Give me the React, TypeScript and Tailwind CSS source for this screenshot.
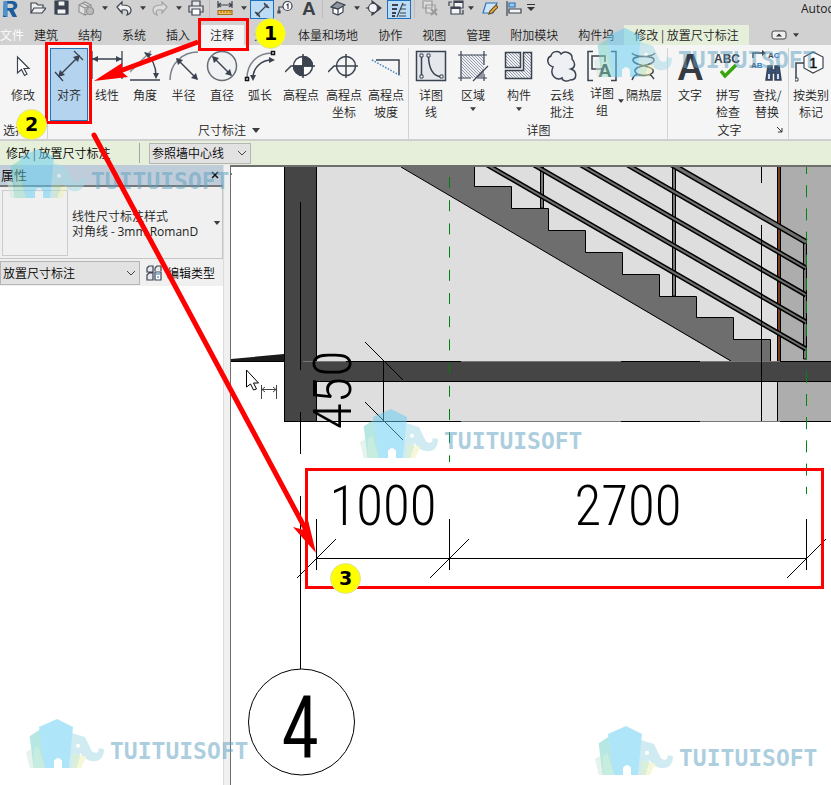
import type { ReactNode } from 'react';

const INK = '#3b4350';

function Caret({ className = 'h-[4px] w-[6px]' }: { className?: string }) {
  return (
    <svg viewBox="0 0 8 5" className={`shrink-0 ${className}`} aria-hidden="true">
      <path d="M0 0h8L4 5z" fill="#3c3c3c" />
    </svg>
  );
}

function Icon({ children }: { children: ReactNode }) {
  return (
    <svg viewBox="0 0 32 32" className="h-8 w-8 shrink-0" fill="none" stroke={INK} strokeWidth="1.5" aria-hidden="true">
      {children}
    </svg>
  );
}

function Small({ children }: { children: ReactNode }) {
  return (
    <svg viewBox="0 0 16 16" className="h-4 w-4 shrink-0" fill="none" stroke={INK} strokeWidth="1.2" aria-hidden="true">
      {children}
    </svg>
  );
}

const icons = {
  modify: (
    <Icon>
      <path d="M10.500 7v16l4-3.500 3 6 2.500-1.500-3-5.500h5z" fill="#fff" strokeWidth="1.200" />
    </Icon>
  ),
  aligned: (
    <Icon>
      <path d="M6 26 26 6" />
      <path d="m2 22 8 9M21 1l9 9" strokeWidth="1.300" />
      <path d="m5 27 2-7 5 5zM27 5l-7 2 5 5z" fill={INK} stroke="none" />
    </Icon>
  ),
  linear: (
    <Icon>
      <path d="M1 9h30M1 1v28M31 1v28" strokeWidth="1.300" />
      <path d="m1 9 6-3v6zM31 9l-6-3v6z" fill={INK} stroke="none" />
    </Icon>
  ),
  angular: (
    <Icon>
      <path d="M1 30h30" />
      <path d="M1 22 22 1" stroke="#8a8f96" />
      <path d="M16 3c7 5 11 13 11 23" />
      <path d="m15 2 8 2-4 4zM27 29l-3-6h6z" fill={INK} stroke="none" />
    </Icon>
  ),
  radial: (
    <Icon>
      <path d="M2 30C2 14 14 2 30 2" stroke="#7b828c" />
      <path d="m9 9 20 20" />
      <path d="m8 8 7 2-5 5zM30 30l-7-2 5-5z" fill={INK} stroke="none" />
    </Icon>
  ),
  diameter: (
    <Icon>
      <circle cx="16" cy="16" r="14.500" stroke="#666d77" fill="#f0f1f3" />
      <path d="m7 7 18 18" />
      <path d="m6 6 7 2-5 5zM26 26l-7-2 5-5z" fill={INK} stroke="none" />
    </Icon>
  ),
  arc: (
    <Icon>
      <path d="M3 28C3 14 13 3 28 3" stroke="#7b828c" />
      <path d="M9 28c0-10 8-18 19-18" />
      <path d="m9 31-3-6h6zM31 10l-6-3v6z" fill={INK} stroke="none" />
      <path d="M1.500 27.500h3v3h-3zM27.500 1.500h3v3h-3z" fill="#fff" stroke="#111" />
    </Icon>
  ),
  spot: (
    <Icon>
      <circle cx="18" cy="16" r="9.500" fill="#fff" />
      <path d="M18 6.500a9.500 9.500 0 0 1 9.500 9.500H18zM18 25.500A9.500 9.500 0 0 1 8.500 16H18z" fill={INK} />
      <path d="M0 22l6-6h24M18 4v24" />
    </Icon>
  ),
  spotCoord: (
    <Icon>
      <circle cx="18" cy="16" r="9.500" />
      <path d="M0 22l6-6h24M18 4v24" />
    </Icon>
  ),
  spotSlope: (
    <Icon>
      <path d="M6 10h23v15" />
      <path d="m2 10 29 16" stroke="#3f82bd" strokeDasharray="1.500 1.500" />
    </Icon>
  ),
  detailLine: (
    <Icon>
      <path d="M1.500 1.500h29v29h-29z" fill="#e4e7ec" />
      <path d="M6.500 6v20M13.500 5c0 12 4 21 13 22" />
      <path d="M5 4h3v3H5zM5 25h3v3H5zM12 4h3v3h-3zM25 25h3v3h-3z" fill="#fff" strokeWidth="1" />
    </Icon>
  ),
  region: (
    <Icon>
      <path d="M4 5h23v23H4z" fill="url(#hatch)" stroke="none" />
      <path d="M4 1v30M27 1v14M27 24v7M1 5h29M1 28h13M20 28h10" strokeWidth="1.200" />
      <path d="m19 27 8-8v8z" fill="#9298a2" stroke="none" />
      <path d="m16 31 15-15" strokeWidth="1.200" />
    </Icon>
  ),
  component: (
    <Icon>
      <path d="M2.500 2.500h15v15h-15zM20.500 2.500h8v26h-26v-8h18z" fill="url(#hatch)" />
    </Icon>
  ),
  cloud: (
    <Icon>
      <path d="M7 17C1 15 0 8 5 6c1-5 8-6 10-2 4-4 12-1 11 5 4 4 3 9-1 10 6 2 7 11-1 11-3 2-8 1-8-2-5 3-13-2-9-11z" fill="#eff0f3" />
    </Icon>
  ),
  group: (
    <Icon>
      <path d="M7 1.500H2v29h5M25 1.500h5v29h-5M17 19H6V6h13v6" />
      <text x="12" y="27" fontSize="19" fontWeight="700" fontFamily="Liberation Sans, sans-serif" fill="#2b3038" stroke="none">A</text>
    </Icon>
  ),
  insulation: (
    <Icon>
      <path d="M4 3c3 6 22 1 22 7S8 15 7 20s9 6 13 5 4 2 6 4M27 3C24 9 5 4 5 10s18 5 20 10-9 6-14 5-5 1-7 5" />
    </Icon>
  ),
  text: (
    <Icon>
      <text x="3" y="30" fontSize="37" fontWeight="700" fontFamily="Liberation Sans, sans-serif" fill="#363b43" stroke="none">A</text>
    </Icon>
  ),
  spelling: (
    <Icon>
      <text x="2" y="13" fontSize="12" fontWeight="700" fontFamily="Liberation Sans, sans-serif" fill={INK} stroke="none">ABC</text>
      <path d="m9 21 4 5 11-11" stroke="#3aa40c" strokeWidth="3.500" />
    </Icon>
  ),
  find: (
    <Icon>
      <path d="M2 8V3h9" />
      <path d="m15 3-4-3v6z" fill={INK} stroke="none" />
      <text x="17" y="8" fontSize="8" fontWeight="700" fontFamily="Liberation Sans, sans-serif" fill={INK} stroke="none">A<tspan fill="#2677c9">C</tspan></text>
      <text x="0" y="18" fontSize="8" fontWeight="700" fontFamily="Liberation Sans, sans-serif" fill={INK} stroke="none">A<tspan fill="#2677c9">B</tspan></text>
      <path d="M17 16h4v4h3v-4h4l2 14h-6v-7h-3v7h-6z" fill="#34537c" />
      <path d="M18 24v5M27 24v5" stroke="#c9dbee" strokeWidth="2" />
    </Icon>
  ),
  tag: (
    <Icon>
      <path d="M1 28V13h8" />
      <path d="m9 7 9-5 10 5v11l-10 5-9-5z" fill="#fff" strokeWidth="1.200" />
      <path d="M0 28h3v3H0z" fill="#fff" strokeWidth="1" />
      <text x="14" y="18" fontSize="15" fontFamily="Liberation Sans, sans-serif" fill="#111" stroke="#111" strokeWidth="0.500">1</text>
    </Icon>
  ),
};

type Tool = { lines: string[]; icon: ReactNode; w: string; active?: boolean; caret?: 'below' | 'side' };

const dimensionTools: Tool[] = [
  { lines: ['对齐'], icon: icons.aligned, w: 'w-[38px]', active: true },
  { lines: ['线性'], icon: icons.linear, w: 'w-[38px]' },
  { lines: ['角度'], icon: icons.angular, w: 'w-[38px]' },
  { lines: ['半径'], icon: icons.radial, w: 'w-[39px]' },
  { lines: ['直径'], icon: icons.diameter, w: 'w-[38px]' },
  { lines: ['弧长'], icon: icons.arc, w: 'w-[38px]' },
  { lines: ['高程点'], icon: icons.spot, w: 'w-[44px]' },
  { lines: ['高程点', '坐标'], icon: icons.spotCoord, w: 'w-[42px]' },
  { lines: ['高程点', '坡度'], icon: icons.spotSlope, w: 'w-[42px]' },
];

const detailTools: Tool[] = [
  { lines: ['详图', '线'], icon: icons.detailLine, w: 'w-[42px]' },
  { lines: ['区域'], icon: icons.region, w: 'w-[42px]', caret: 'below' },
  { lines: ['构件'], icon: icons.component, w: 'w-[50px]', caret: 'below' },
  { lines: ['云线', '批注'], icon: icons.cloud, w: 'w-[36px]' },
  { lines: ['详图', '组'], icon: icons.group, w: 'w-[44px]', caret: 'side' },
  { lines: ['隔热层'], icon: icons.insulation, w: 'w-[40px]' },
];

const textTools: Tool[] = [
  { lines: ['文字'], icon: icons.text, w: 'w-[38px]' },
  { lines: ['拼写', '检查'], icon: icons.spelling, w: 'w-[38px]' },
  { lines: ['查找/', '替换'], icon: icons.find, w: 'w-[40px]' },
];

function ToolButton({ tool }: { tool: Tool }) {
  return (
    <button
      type="button"
      className={`relative flex h-[73px] shrink-0 flex-col items-center border pt-px leading-[17px] whitespace-nowrap ${tool.w} ${
        tool.active ? 'border-[#2a6fb5] bg-[#b4d3ee]' : 'border-transparent'
      }`}
    >
      {tool.icon}
      <span className={`block ${tool.caret === 'side' ? 'mt-[2px]' : 'mt-1'}`}>
        {tool.lines.map((line) => (
          <span key={line} className="block">{line}</span>
        ))}
      </span>
      {tool.caret === 'below' && <Caret className="mt-1 h-[4px] w-[6px]" />}
      {tool.caret === 'side' && <Caret className="absolute -right-px bottom-[17px] h-[4px] w-[6px]" />}
    </button>
  );
}

function Panel({ tools, title, className, children }: { tools: Tool[]; title: string; className: string; children?: ReactNode }) {
  return (
    <section className={`flex shrink-0 flex-col border-r border-[#d2d2d2] ${className}`}>
      <div className="flex">
        {tools.map((tool) => (
          <ToolButton key={tool.lines.join('')} tool={tool} />
        ))}
      </div>
      <div className="relative flex h-[18px] items-center justify-center gap-[6px] leading-[18px]">
        {title}
        {children}
      </div>
    </section>
  );
}

type QuickTool = { label: string; w: string; icon: ReactNode; active?: boolean };

const fileTools: QuickTool[] = [
  { label: '打开', w: 'w-[24px]', icon: <Small><path d="M1 13V3h5l2 2h5v3M1 13 4 8h12l-4 5z" fill="#eee" /></Small> },
  { label: '保存', w: 'w-[24px]', icon: <Small><path d="M1 1h13v13H1z" fill={INK} /><path d="M4 1h7v5H4zM3 9h9v5H3z" fill="#f4f4f4" /></Small> },
  { label: '同步', w: 'w-[38px]', icon: <><Small><g stroke="#929292"><path d="m1 5 6-3 6 3v7l-6 3-6-3zM1 5l6 3 6-3M7 8v7M4 3l6 3v8" fill="#e1e1e1" /><circle cx="12" cy="11" r="3.500" fill="#bbb" /></g></Small><Caret className="ml-2 h-[4px] w-[6px]" /></> },
  { label: '放弃', w: 'w-[36px]', icon: <><Small><path d="m1 7 5-5v3c6 0 9 2 9 5 0 2-1 4-4 5 2-4 0-6-5-5v3z" fill="#f0f0f0" /></Small><Caret className="ml-2 h-[4px] w-[6px]" /></> },
  { label: '重做', w: 'w-[36px]', icon: <><Small><path d="m15 7-5-5v3c-6 0-9 2-9 5 0 2 1 4 4 5-2-4 0-6 5-5v3z" fill="#ddd" stroke="#a3a3a3" /></Small><Caret className="ml-2 h-[4px] w-[6px]" /></> },
  { label: '打印', w: 'w-[24px]', icon: <Small><path d="M4 6V1h8v5M1 6h14v6H1z" fill="#e8e8e8" /><path d="M4 9h8v6H4z" fill="#fff" /></Small> },
];

const annotateTools: QuickTool[] = [
  { label: '测量', w: 'w-[36px]', icon: <><Small><path d="M1 5h14M1 1v7M15 1v7M4 3 1 5l3 2M12 3l3 2-3 2" /><path d="M1 10.500h14v4H1z" fill="#f0c45d" stroke="#a96f16" /><path d="M4 11v2M7 11v2M10 11v2M13 11v2" stroke="#a96f16" /></Small><Caret className="ml-2 h-[4px] w-[6px]" /></> },
  { label: '对齐尺寸标注', w: 'w-[24px]', active: true, icon: <Small><path d="m3 13 10-10M1 10l5 5M10 1l5 5M3 10v3h3M10 3h3v3" /></Small> },
  { label: '按类别标记', w: 'w-[24px]', icon: <Small><path d="M2 13V7h4" /><circle cx="10.500" cy="6" r="4.500" fill="#fff" /><path d="M9.500 5 11 4v5M1 11h2v2H1z" /></Small> },
  { label: '文字', w: 'w-[24px]', icon: <Small><text x="1" y="15" fontSize="19" fontWeight="700" fontFamily="Liberation Sans, sans-serif" fill="#3b3f46" stroke="none">A</text></Small> },
];

const viewTools: QuickTool[] = [
  { label: '三维视图', w: 'w-[36px]', icon: <><Small><path d="M3 7v6l5 2 5-3V6" fill="#fff" /><path d="m1 7 6-5 8 3-7 4z" fill="#8f959d" /><path d="M8 9v6M1 7l7 2" /></Small><Caret className="ml-2 h-[4px] w-[6px]" /></> },
  { label: '剖面', w: 'w-[24px]', icon: <Small><path d="M6 1v14l9-7z" fill={INK} /><circle cx="7" cy="8" r="4.500" fill="#f3f3f3" /><path d="M0 8h3" /></Small> },
  { label: '细线', w: 'w-[24px]', active: true, icon: <Small><path d="M1 3h6M1 7h5M1 11h4M1 14h3" strokeWidth="2" /><path d="M12 1 6 15M11 3h4M10 7h5M9 11h6M8 14h7" /></Small> },
];

const windowTools: QuickTool[] = [
  { label: '关闭非活动视图', w: 'w-[26px]', icon: <Small><g stroke="#999"><path d="M1 1h9v7H1zM4 5h9v8H4z" fill="#ddd" /><path d="m9 9 6 6m0-6-6 6" strokeWidth="2" /></g></Small> },
  { label: '切换窗口', w: 'w-[34px]', icon: <><Small><path d="M6 1h9v7H6zM3 7h9v7H3z" fill="#f4f4f4" /><path d="M6 2h9M3 8h9" strokeWidth="2" /><path d="M1 6V2h3M15 10v4h-2" /></Small><Caret className="ml-1 h-[4px] w-[6px]" /></> },
  { label: '编辑草图', w: 'w-[24px]', icon: <Small><path d="m4 3h11l-4 10H1z" fill="#cfe4f7" stroke="#2774b9" /><path d="m7 14 1-3 6-6 2 2-6 6z" fill="#f3b944" stroke="#70501c" /></Small> },
  { label: '对齐', w: 'w-[24px]', icon: <Small><path d="M1 1v15" /><path d="M3 3h6v4H3z" fill="#9fc7eb" stroke="#2774b9" /><path d="M3 9h12v4H3z" fill="#f4f4f4" /></Small> },
];

function QuickGroup({ items }: { items: QuickTool[] }) {
  return (
    <>
      {items.map((item) => (
        <button
          key={item.label}
          type="button"
          aria-label={item.label}
          className={`flex shrink-0 items-center ${item.w} ${item.active ? 'h-[19px] justify-center border border-[#1d6fc0] bg-[#bcdcf5]' : 'h-4 pl-[3px]'}`}
        >
          {item.icon}
        </button>
      ))}
    </>
  );
}

function QuickAccess() {
  return (
    <div className="flex h-[25px] items-start">
      <svg viewBox="0 0 18 18" className="mr-[9px] ml-[2px] h-[18px] w-4 shrink-0" aria-hidden="true">
        <path d="M2 0h9c8 0 8 9 2 10l4 8h-5L8 11H6v7H1z" fill="#1d5d9b" />
        <path d="M6 3h4c4 0 4 5 0 5H6z" fill="#d1d1d1" />
        <path d="M2 0h4v18l-5-2z" fill="#4b93cd" />
      </svg>
      <QuickGroup items={fileTools} />
      <div className="mr-[4px] h-[18px] w-px bg-[#bcbcbc]" />
      <QuickGroup items={annotateTools} />
      <div className="mr-[4px] h-[18px] w-px bg-[#bcbcbc]" />
      <QuickGroup items={viewTools} />
      <div className="mr-[4px] ml-[3px] h-[18px] w-px bg-[#bcbcbc]" />
      <QuickGroup items={windowTools} />
      <button type="button" aria-label="自定义快速访问工具栏" className="mt-1">
        <svg viewBox="0 0 8 8" className="h-2 w-2"><path d="M0 .500h8" stroke="#333" /><path d="M0 3h8L4 7z" fill="#333" /></svg>
      </button>
      <div className="ml-auto w-[30px] overflow-hidden font-['Open_Sans',sans-serif] leading-[18px] font-normal whitespace-nowrap">Autod</div>
    </div>
  );
}

const tabs = ['文件', '建筑', '结构', '系统', '插入', '注释', '分析', '体量和场地', '协作', '视图', '管理', '附加模块', '构件坞', '修改 | 放置尺寸标注'];

function tabStyle(index: number) {
  if (index === 0) return 'text-white';
  if (tabs[index] === '注释') return 'px-[10px] bg-[#f5f5f5]';
  if (index === tabs.length - 1) return 'px-[10px] bg-[#e6efd9]';
  return 'px-[10px]';
}

function TabBar() {
  return (
    <nav className="flex h-[20px] items-stretch overflow-hidden">
      {tabs.map((tab, i) => (
        <button key={tab} type="button" className={`shrink-0 leading-[20px] whitespace-nowrap ${tabStyle(i)}`}>
          {tab}
        </button>
      ))}
      <button type="button" aria-label="最小化功能区" className="ml-[22px] flex shrink-0 items-center gap-[6px]">
        <svg viewBox="0 0 16 10" className="h-[10px] w-4"><rect x="1" y="1" width="14" height="8" rx="2" fill="#eee" stroke="#444" /><path d="M5 6.500h6L8 3.500z" fill="#333" /></svg>
        <Caret />
      </button>
    </nav>
  );
}

function Ribbon() {
  return (
    <div className="flex h-[96px] overflow-hidden border-b-2 border-[#cfcfcf] bg-[#f5f5f5] pt-[3px]">
      <section className="flex w-[48px] shrink-0 flex-col border-r border-[#d2d2d2]">
        <ToolButton tool={{ lines: ['修改'], icon: icons.modify, w: 'w-[46px]' }} />
        <div className="pl-[3px] leading-[18px] whitespace-nowrap">选择</div>
      </section>
      <Panel tools={dimensionTools} title="尺寸标注" className="w-[361px] pl-[2px]">
        <Caret className="h-[5px] w-2" />
      </Panel>
      <Panel tools={detailTools} title="详图" className="w-[259px] pl-px" />
      <Panel tools={textTools} title="文字" className="w-[121px] pl-[3px]">
        <svg viewBox="0 0 6 6" className="absolute right-[5px] h-[6px] w-[6px]"><path d="m0 0 5 5M5 1v4H1" fill="none" stroke="#333" /></svg>
      </Panel>
      <ToolButton tool={{ lines: ['按类别', '标记'], icon: icons.tag, w: 'w-[44px]' }} />
    </div>
  );
}

function SelectBox({ id, label, value, className }: { id: string; label: string; value: string; className: string }) {
  return (
    <div className={`relative shrink-0 ${className}`}>
      <label htmlFor={id} className="sr-only">{label}</label>
      <select id={id} defaultValue={value} className="block h-full w-full appearance-none border border-[#b5b5b5] bg-[#e2e2e2] pl-[2px] text-black">
        <option>{value}</option>
      </select>
      <svg viewBox="0 0 10 6" className="pointer-events-none absolute top-1/2 right-[4px] h-[6px] w-[10px] -translate-y-1/2"><path d="m1 1 4 4 4-4" fill="none" stroke="#444" /></svg>
    </div>
  );
}

function OptionsBar() {
  return (
    <div className="flex h-[24px] items-center bg-[#e6efd9] text-black">
      <div className="w-[139px] pl-[6px] leading-[22px] whitespace-nowrap">修改 | 放置尺寸标注</div>
      <div className="mr-[9px] h-5 w-px bg-[#a5a5a5]" />
      <SelectBox id="location" label="定位" value="参照墙中心线" className="h-[21px] w-[102px]" />
    </div>
  );
}

function Properties() {
  return (
    <aside className="flex w-[224px] shrink-0 flex-col border-r border-[#dcdcdc] bg-white text-[#222]">
      <div className="flex h-[20px] items-center justify-between bg-[#bfcddb] pl-px text-black">
        <h2 className="text-[13px] leading-[18px]">属性</h2>
        <button type="button" aria-label="关闭" className="mr-[4px]">
          <svg viewBox="0 0 8 8" className="h-2 w-2"><path d="m1 1 6 6m0-6-6 6" stroke="#111" strokeWidth="1.500" /></svg>
        </button>
      </div>
      <div className="h-[74px] border-t-2 border-r border-b border-t-[#777] border-r-[#c5c5c5] border-b-[#c5c5c5] bg-[#f0f0f0]">
        <button type="button" className="flex w-full items-center pt-[3px] pl-[2px] text-left">
          <span className="h-[66px] w-[66px] shrink-0 border border-[#cbcbcb]" />
          <span className="ml-1 block min-w-0 flex-1 leading-[15px] whitespace-nowrap">
            线性尺寸标注样式<br />
            对角线 - <span className="font-['Open_Sans',sans-serif] font-normal">3mm RomanD</span>
          </span>
          <Caret className="mr-[1px] h-[4px] w-2" />
        </button>
      </div>
      <div className="flex h-[27px] items-center bg-[#f0f0f0] text-black">
        <SelectBox id="category" label="类别" value="放置尺寸标注" className="h-[24px] w-[140px]" />
        <button type="button" className="ml-[6px] flex items-center gap-[5px] whitespace-nowrap">
          <Small><path d="M1 3 3 1h4v6H1zM9 3l2-2h4v5M9 3v3M1 10l2-2h4v7H1z" fill="#e5e9ee" /><path d="M9 7h6v8H9z" fill="#fff" /><path d="M10 9h4M11 12h2" stroke="#2774b9" /></Small>
          编辑类型
        </button>
      </div>
      <div className="flex-1" />
    </aside>
  );
}

const railEnds = [268, 295, 322, 349];

function Rail({ y, w }: { y: number; w: number }) {
  const coords = { x1: 406, y1: y - 231, x2: 806, y2: y };
  return (
    <g>
      <line {...coords} stroke="#000" strokeWidth={w + 2} />
      <line {...coords} stroke="#707070" strokeWidth={w - 1} />
    </g>
  );
}

function SectionView() {
  return (
    <main className="min-w-0 flex-1 overflow-hidden border-t-2 border-l border-[#6e6e6e] bg-white">
      <svg viewBox="231 167 600 618" className="block h-[618px] w-[600px]" fill="none" stroke="#000" aria-label="楼梯剖面视图">
        <g stroke="none">
          <path d="M317 167h514v254H317z" fill="#dedede" />
          <path d="M780 167h51v254h-53v-40h2z" fill="#adadad" />
          <path d="M401 167h73v19h37v22h37v22h37v22h37v22h37v22h37v21h37v22h37v22h-40z" fill="#6e6e6e" />
        </g>
        <path d="M401 167 731 361M474.500 167v19.500h37v22h37v22h37v22h37v22h37v22h37v21h37v22h37V361" />
        <path d="M777 167h4v194h-4z" fill="#7d3b22" stroke="none" />
        <path d="M777.500 167v194M780.500 167v194M777.500 381v40" />
        <g fill="#777">
          <path d="M540.500 167h3v41h-3zM672.500 167h3v129h-3zM803.500 243h3v116h-3z" />
        </g>
        {railEnds.map((y) => (
          <Rail key={y} y={y} w={3} />
        ))}
        <Rail y={242} w={4} />
        <path d="M284.500 166v255.500h32V166z" fill="#454545" />
        <path d="M316 361h516v20.500H316z" fill="#454545" stroke="none" />
        <path d="M316 381.500h516M284 421.500h177M621 421.500h79M780 421.500h51M316 361.500h145M621 361.500h79M780 361.500h51" />
        <path d="M461 361.500h160M700 361.500h80M461 421.500h160M700 421.500h80M303 361.500h43" stroke="#777" />
        <path d="M231 359l53-5v8h-53z" fill="#1a1a1a" stroke="none" />
        <path d="M231 361.500h53M231 174h1" />
        <path d="M300.500 202v168M300.500 412v42M300.500 496v173M761.500 167v16M761.500 225v196" />
        <path d="M449.500 177v285" stroke="#00800f" strokeDasharray="11 12.200" />
        <path d="M806.500 162v332" stroke="#00850f" strokeDasharray="12 11.200" />
        <path d="M383.500 361v60M365 342l38 38M365 402l38 38" />
        <path d="M316 558.500h491M316.500 519v51M449.500 519v51M806.500 519v51M297 578l39-39M430 578l39-39M787 578l39-39" />
        <circle cx="301.500" cy="722" r="53" />
        <g fill="#000" stroke="none" textAnchor="middle" className="font-['Roboto_Condensed','Open_Sans',sans-serif] text-[55px] font-light">
          <text x="383" y="525">1000</text>
          <text x="628" y="525">2700</text>
          <text transform="translate(351 390) rotate(-90)" className="text-[54px]">450</text>
          <text x="300" y="757" stroke="#000" strokeWidth="2" className="font-['Open_Sans_Condensed_Light','Roboto_Condensed',sans-serif] text-[84px]">4</text>
        </g>
        <path d="M246.500 370v17l4-3 3 6 3-1-3-6h5z" fill="#fff" />
        <path d="M261.500 385v14M276.500 385v14M262 389.500h14M265 387l-3 2.500 3 2.500M273 387l3 2.500-3 2.500" stroke="#444" />
      </svg>
    </main>
  );
}

function Watermark({ place }: { place: string }) {
  return (
    <div className={`pointer-events-none absolute flex items-end opacity-50 ${place}`}>
      <svg viewBox="195 825 237 153" className="h-[51px] w-[79px]" aria-hidden="true">
        <path d="m195 927 15-8 22-10 8 66h-34z" fill="#cfe9dc" />
        <path d="m206 880 30-20 35 5v110h-53z" fill="#70d0c8" />
        <path d="m218 917 14-8 20 66h-34z" fill="#90dcc4" />
        <path d="m306 862 66 20 17 35q5 14 18 12 8-3 5-13l17 2q0 36-32 37-22-1-39-25l-20 45h-32z" fill="#a3dbe6" />
        <path d="m234 852 54-24 48 24-12 123h-21v-22q-12-16-24 0v22h-27z" fill="#62cdf4" />
        <path d="m335 933 24 4-12 38h-14z" fill="#b5e0b5" />
        <path d="m359 937 17 4-16 34h-13z" fill="#eef0b0" />
        <circle cx="351" cy="908" r="6" fill="#fff" />
      </svg>
      <span className="mb-[6px] ml-[5px] font-['DejaVu_Sans_Mono',monospace] text-[23px] leading-[24px] font-bold text-[#5c9fbf]">TUITUISOFT</span>
    </div>
  );
}

function Step({ n, place }: { n: number; place: string }) {
  return (
    <span className={`absolute flex h-[31px] w-[31px] items-center justify-center rounded-full border border-[#e2e29a] bg-[#ffff00] font-['DejaVu_Sans',sans-serif] text-[19px] font-bold text-black ${place}`}>
      {n}
    </span>
  );
}

function Annotations() {
  return (
    <>
      <svg viewBox="0 0 831 785" className="pointer-events-none absolute top-0 left-0 h-[785px] w-[831px]" fill="none" stroke="#ff0000" strokeWidth="3" aria-hidden="true">
        <path d="M199.500 19.500h48v30h-48zM46.500 43.500h44v79h-44zM306.500 469.500h516v118h-516z" />
        <path d="M198 42 120 71" strokeWidth="5" />
        <path d="m94 81 28-18 0 9 6 5z" fill="#f00" stroke="none" />
        <path d="m94 135 212 395" strokeWidth="5" strokeLinecap="round" />
        <path d="m316 553-23-26 11 3 4-10z" fill="#f00" stroke="none" />
      </svg>
      <Step n={1} place="left-[255px] top-[18px]" />
      <Step n={2} place="left-[16px] top-[109px]" />
      <Step n={3} place="left-[330px] top-[563px]" />
    </>
  );
}

export default function App() {
  return (
    <div className="relative flex min-h-screen flex-col overflow-hidden bg-white font-['Noto_Sans_CJK_SC',sans-serif] text-[12px] font-[350] text-[#222]">
      <svg width="0" height="0" className="absolute" aria-hidden="true">
        <pattern id="hatch" width="3" height="3" patternUnits="userSpaceOnUse">
          <path d="M0 0h3v3H0z" fill="#eef0f3" />
          <path d="m0 0 3 3" stroke="#7e8794" strokeWidth="0.800" />
        </pattern>
      </svg>
      <header className="bg-[#d1d1d1]">
        <QuickAccess />
        <TabBar />
        <Ribbon />
        <OptionsBar />
      </header>
      <div className="flex flex-1">
        <Properties />
        <div className="w-[6px] shrink-0 bg-[#f0f0f0]" />
        <SectionView />
      </div>
      <Watermark place="left-[594px] top-[27px]" />
      <Watermark place="left-[7px] top-[148px]" />
      <Watermark place="left-[360px] top-[408px]" />
      <Watermark place="left-[26px] top-[718px]" />
      <Watermark place="left-[595px] top-[725px]" />
      <Annotations />
    </div>
  );
}
